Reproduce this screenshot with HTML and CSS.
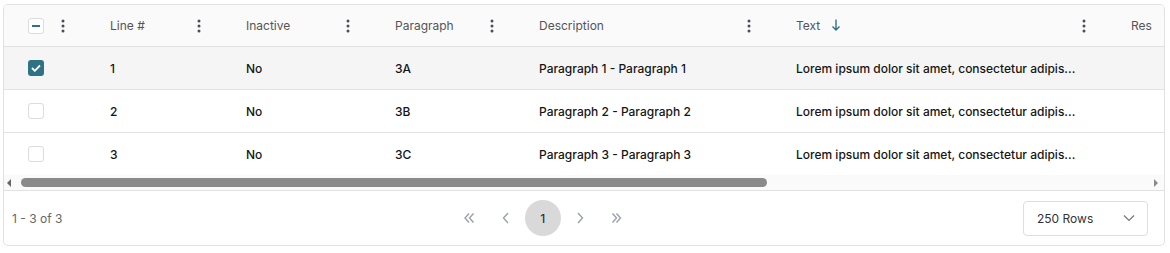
FILE: index.html
```html
<!DOCTYPE html>
<html>
<head>
  <meta charset="UTF-8">
  <meta name="viewport" content="width=device-width, initial-scale=1.0">
  <title>Lines</title>
  <link rel="stylesheet" href="styles.css">
</head>
<body>
  <div class="grid-box">
    <div class="grid-scroll">
      <table class="grid">
        <colgroup>
          <col style="width:90px">
          <col style="width:136px">
          <col style="width:149px">
          <col style="width:144px">
          <col style="width:257px">
          <col style="width:335px">
          <col style="width:200px">
        </colgroup>
        <thead>
          <tr>
            <th class="sel-col">
              <div class="th-inner">
                <span class="check partial"><span class="dash"></span></span>
                <span class="kebab"><svg width="4" height="14" viewBox="0 0 4 14"><circle cx="2" cy="2" r="1.5"/><circle cx="2" cy="7" r="1.5"/><circle cx="2" cy="12" r="1.5"/></svg></span>
              </div>
            </th>
            <th><div class="th-inner"><span>Line #</span><span class="kebab"><svg width="4" height="14" viewBox="0 0 4 14"><circle cx="2" cy="2" r="1.5"/><circle cx="2" cy="7" r="1.5"/><circle cx="2" cy="12" r="1.5"/></svg></span></div></th>
            <th><div class="th-inner"><span>Inactive</span><span class="kebab"><svg width="4" height="14" viewBox="0 0 4 14"><circle cx="2" cy="2" r="1.5"/><circle cx="2" cy="7" r="1.5"/><circle cx="2" cy="12" r="1.5"/></svg></span></div></th>
            <th><div class="th-inner"><span>Paragraph</span><span class="kebab"><svg width="4" height="14" viewBox="0 0 4 14"><circle cx="2" cy="2" r="1.5"/><circle cx="2" cy="7" r="1.5"/><circle cx="2" cy="12" r="1.5"/></svg></span></div></th>
            <th><div class="th-inner"><span>Description</span><span class="kebab"><svg width="4" height="14" viewBox="0 0 4 14"><circle cx="2" cy="2" r="1.5"/><circle cx="2" cy="7" r="1.5"/><circle cx="2" cy="12" r="1.5"/></svg></span></div></th>
            <th>
              <div class="th-inner">
                <span>Text <svg class="sort" width="10" height="14" viewBox="0 0 10 14"><path d="M5 1.5v10M1.5 8.5L5 12l3.5-3.5" fill="none" stroke="#2e7385" stroke-width="1.4"/></svg></span>
                <span class="kebab"><svg width="4" height="14" viewBox="0 0 4 14"><circle cx="2" cy="2" r="1.5"/><circle cx="2" cy="7" r="1.5"/><circle cx="2" cy="12" r="1.5"/></svg></span>
              </div>
            </th>
            <th><div class="th-inner"><span>Res</span></div></th>
          </tr>
        </thead>
        <tbody>
          <tr class="selected">
            <td class="sel-col"><span class="check on"><svg width="10" height="8" viewBox="0 0 10 8"><path d="M1 4l2.8 2.8L9 1.5" fill="none" stroke="#fff" stroke-width="1.8"/></svg></span></td>
            <td>1</td>
            <td>No</td>
            <td>3A</td>
            <td>Paragraph 1 - Paragraph 1</td>
            <td>Lorem ipsum dolor sit amet, consectetur adipis...</td>
            <td></td>
          </tr>
          <tr>
            <td class="sel-col"><span class="check"></span></td>
            <td>2</td>
            <td>No</td>
            <td>3B</td>
            <td>Paragraph 2 - Paragraph 2</td>
            <td>Lorem ipsum dolor sit amet, consectetur adipis...</td>
            <td></td>
          </tr>
          <tr class="last">
            <td class="sel-col"><span class="check"></span></td>
            <td>3</td>
            <td>No</td>
            <td>3C</td>
            <td>Paragraph 3 - Paragraph 3</td>
            <td>Lorem ipsum dolor sit amet, consectetur adipis...</td>
            <td></td>
          </tr>
        </tbody>
      </table>
    </div>

    <!-- horizontal scrollbar -->
    <div class="hscroll">
      <span class="arrow left"></span>
      <div class="track"><div class="thumb"></div></div>
      <span class="arrow right"></span>
    </div>

    <div class="grid-footer">
      <span class="count">1 - 3 of 3</span>
      <div class="pager">
        <button class="pg-btn"><svg width="16" height="16" viewBox="0 0 16 16"><path d="M8 3.5L4 8l4 4.5M12.5 3.5L8.5 8l4 4.5" fill="none" stroke="#9aa1ab" stroke-width="1.4"/></svg></button>
        <button class="pg-btn"><svg width="16" height="16" viewBox="0 0 16 16"><path d="M10 3L5.5 8l4.5 5" fill="none" stroke="#9aa1ab" stroke-width="1.4"/></svg></button>
        <button class="pg-btn current">1</button>
        <button class="pg-btn"><svg width="16" height="16" viewBox="0 0 16 16"><path d="M6 3l4.5 5L6 13" fill="none" stroke="#9aa1ab" stroke-width="1.4"/></svg></button>
        <button class="pg-btn"><svg width="16" height="16" viewBox="0 0 16 16"><path d="M3.5 3.5l4 4.5-4 4.5M7.5 3.5l4 4.5-4 4.5" fill="none" stroke="#9aa1ab" stroke-width="1.4"/></svg></button>
      </div>
      <div class="rows-select">
        <span>250 Rows</span>
        <svg width="14" height="14" viewBox="0 0 14 14"><path d="M2 4.5l5 5 5-5" fill="none" stroke="#777" stroke-width="1.2"/></svg>
      </div>
    </div>
  </div>
</body>
</html>
```

FILE: styles.css
```css
body {
  margin: 0;
  background: #fff;
  font-family: Inter, "Noto Sans", sans-serif;
  font-size: 12px;
  color: #1a1a1a;
}
.grid-box {
  margin: 4px 5px 0 3px;
  border: 1px solid #e2e2e2;
  border-radius: 5px;
  overflow: hidden;
}
.grid-scroll {
  overflow: hidden;
}
.grid {
  border-collapse: collapse;
  table-layout: fixed;
  width: 1311px;
}
.grid th {
  height: 41px;
  padding: 0 21px 0 16px;
  background: #fafafa;
  color: #555;
  font-weight: 400;
  text-align: left;
  border-bottom: 1px solid #e2e2e2;
}
.grid th.sel-col {
  padding-left: 24px;
}
.th-inner {
  display: flex;
  align-items: center;
  justify-content: space-between;
  white-space: nowrap;
}
.th-inner .sort {
  vertical-align: -2px;
  margin-left: 7px;
}
.kebab {
  width: 20px;
  display: flex;
  justify-content: center;
}
.kebab svg {
  fill: #4a4f57;
}
.grid td {
  height: 42px;
  padding: 0 16px;
  font-weight: 500;
  color: #151515;
  white-space: nowrap;
  overflow: hidden;
  border-bottom: 1px solid #e2e2e2;
}
.grid td.sel-col {
  padding-left: 24px;
}
.grid tr.last td {
  border-bottom: none;
}
.grid tr.selected td {
  background: #f5f5f5;
}
.check {
  display: flex;
  align-items: center;
  justify-content: center;
  width: 14px;
  height: 14px;
  border: 1px solid #dcdcdc;
  border-radius: 3px;
  background: #fff;
}
.check.on {
  width: 16px;
  height: 16px;
  border: none;
  background: #2e7385;
}
.check .dash {
  width: 8px;
  height: 2px;
  background: #2e7385;
}
.hscroll {
  display: flex;
  align-items: center;
  height: 15px;
  background: #fafafa;
  border-bottom: 1px solid #e2e2e2;
}
.arrow {
  width: 0;
  height: 0;
  border-top: 4px solid transparent;
  border-bottom: 4px solid transparent;
}
.arrow.left {
  margin: 0 6px 0 3px;
  border-right: 4px solid #666;
}
.arrow.right {
  margin: 0 6px 0 6px;
  border-left: 4px solid #8a8a8a;
}
.track {
  flex: 1;
  padding: 0 0 0 4px;
}
.thumb {
  width: 746px;
  height: 9px;
  border-radius: 5px;
  background: #8a8a8a;
}
.grid-footer {
  display: flex;
  align-items: center;
  justify-content: space-between;
  height: 54px;
  padding: 0 16px 0 8px;
}
.count {
  color: #666;
}
.pager {
  display: flex;
  gap: 1px;
}
.pg-btn {
  width: 36px;
  height: 36px;
  border: none;
  border-radius: 50%;
  background: transparent;
  display: flex;
  align-items: center;
  justify-content: center;
  padding: 0;
  font-family: inherit;
  font-size: 12px;
  font-weight: 500;
  color: #333;
}
.pg-btn.current {
  background: #d9d9d9;
}
.rows-select {
  display: flex;
  align-items: center;
  justify-content: space-between;
  padding: 0 11px 0 13px;
  box-sizing: border-box;
  width: 125px;
  height: 35px;
  border: 1px solid #dedede;
  border-radius: 4px;
  color: #333;
}
```
